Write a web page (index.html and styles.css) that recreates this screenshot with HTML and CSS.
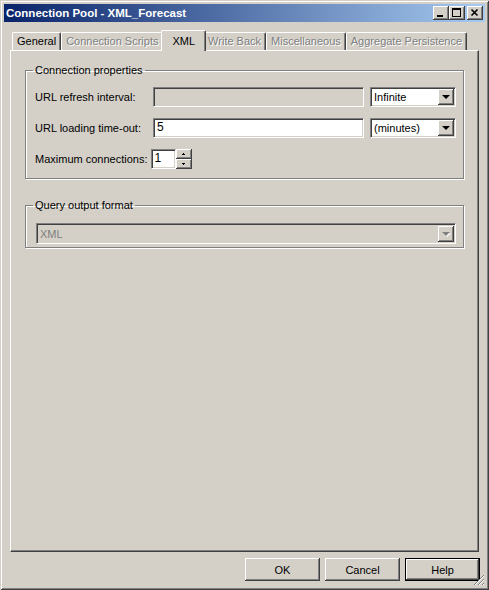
FILE: index.html
```html
<!DOCTYPE html>
<html lang="en">
<head>
  <meta charset="UTF-8">
  <title>Connection Pool - XML_Forecast</title>
  <link rel="stylesheet" href="styles.css">
</head>
<body>

  <div class="window">
    <!-- Title bar -->
    <div class="titlebar">
      <span class="title">Connection Pool - XML_Forecast</span>
      <div class="caption-buttons">
        <span class="cap-btn">
          <svg width="16" height="14" shape-rendering="crispEdges"><rect x="4" y="9" width="6" height="2" fill="#000"/></svg>
        </span>
        <span class="cap-btn">
          <svg width="16" height="14" shape-rendering="crispEdges"><rect x="3.5" y="2.5" width="8" height="8" fill="none" stroke="#000"/><rect x="3" y="3" width="9" height="1" fill="#000"/></svg>
        </span>
        <span class="cap-btn close">
          <svg width="16" height="14"><path d="M4.5 3.5 L10.5 9.5 M10.5 3.5 L4.5 9.5" stroke="#000" stroke-width="1.6"/></svg>
        </span>
      </div>
    </div>

    <!-- Tabs -->
    <div class="tabs">
      <div class="tab">General</div>
      <div class="tab disabled">Connection Scripts</div>
      <div class="tab active">XML</div>
      <div class="tab disabled">Write Back</div>
      <div class="tab disabled">Miscellaneous</div>
      <div class="tab disabled">Aggregate Persistence</div>
    </div>

    <div class="panel">
      <fieldset class="group">
        <legend>Connection properties</legend>

        <div class="row">
          <label class="label">URL refresh interval:</label>
          <div class="field readonly"></div>
          <div class="combo">
            <span class="combo-value">Infinite</span>
            <span class="combo-arrow"></span>
          </div>
        </div>

        <div class="row">
          <label class="label">URL loading time-out:</label>
          <div class="field">5</div>
          <div class="combo">
            <span class="combo-value">(minutes)</span>
            <span class="combo-arrow"></span>
          </div>
        </div>

        <div class="row">
          <label>Maximum connections:</label>
          <div class="spinner">
            <div class="spin-field">1</div>
            <div class="spin-buttons">
              <span class="spin-btn"><svg width="16" height="10" shape-rendering="crispEdges"><path d="M7 4h1v1h-1zM6 5h3v1h-3z" fill="#000"/></svg></span>
              <span class="spin-btn"><svg width="16" height="10" shape-rendering="crispEdges"><path d="M6 4h3v1h-3zM7 5h1v1h-1z" fill="#000"/></svg></span>
            </div>
          </div>
        </div>
      </fieldset>

      <fieldset class="group query">
        <legend>Query output format</legend>
        <div class="combo wide disabled">
          <span class="combo-value">XML</span>
          <span class="combo-arrow"></span>
        </div>
      </fieldset>
    </div>

    <div class="buttons">
      <button class="btn">OK</button>
      <button class="btn">Cancel</button>
      <button class="btn default">Help</button>
    </div>

    <svg class="grip" width="12" height="12" shape-rendering="crispEdges">
      <path d="M11 1 L1 11 M11 5 L5 11 M11 9 L9 11" stroke="#808080" stroke-width="1"/>
      <path d="M11 2 L2 11 M11 6 L6 11 M11 10 L10 11" stroke="#fff" stroke-width="1"/>
    </svg>
  </div>

</body>
</html>
```

FILE: styles.css
```css
* { box-sizing: border-box; }
body { margin: 0; font-family: "Liberation Sans", Arial, sans-serif; font-size: 11px; color: #000; background: #d4d0c8; }

.window { position: relative; width: 489px; height: 590px; padding: 4px; display: flex; flex-direction: column; background: #d4d0c8;
  box-shadow: inset 1px 1px #d4d0c8, inset -1px -1px #404040, inset 2px 2px #fff, inset -2px -2px #808080; }

/* title bar */
.titlebar { height: 18px; display: flex; align-items: center; justify-content: space-between; padding: 0 2px;
  background: linear-gradient(to right, #0a246a, #a6caf0); }
.title { color: #fff; font-weight: bold; font-size: 11.5px; }
.caption-buttons { display: flex; }
.cap-btn { width: 16px; height: 14px; display: block; background: #d4d0c8;
  box-shadow: inset -1px -1px #404040, inset 1px 1px #fff, inset -2px -2px #808080; }
.cap-btn svg { display: block; }
.cap-btn.close { margin-left: 2px; }

/* tabs */
.tabs { display: flex; align-items: flex-end; height: 20px; margin-top: 8px; padding-left: 8px; }
.tab { height: 18px; line-height: 17px; padding: 0 4px; border-top: 1px solid #fff; border-left: 1px solid #fff;
  border-right: 1px solid #404040; border-radius: 2px 2px 0 0; box-shadow: inset -1px 0 #808080; white-space: nowrap; }
.tab.disabled { color: #808080; text-shadow: 1px 1px #fff; }
.tab.active { position: relative; height: 21px; line-height: 21px; margin: 0 -2px -1px; padding: 0 10px; background: #d4d0c8; }
.tab.active + .tab { border-left: none; }

/* tab page */
.panel { flex: 1; margin: 0 6px; padding: 13px 14px 0; border-top: 1px solid #fff; border-left: 1px solid #fff;
  border-right: 1px solid #404040; border-bottom: 1px solid #404040; box-shadow: inset -1px -1px #808080; }

.group { margin: 0; padding: 10px 7px 9px 9px; border: 1px solid #808080; box-shadow: 1px 1px #fff, inset 1px 1px #fff;
  display: flex; flex-direction: column; gap: 11px; }
.group legend { margin-left: -2px; padding: 0 2px; line-height: 13px; }
.group.query { margin-top: 20px; padding: 11px 7px 3px 9px; }

.row { display: flex; align-items: center; height: 20px; }
.label { width: 118px; }
.row > label:not(.label) { margin-right: 3px; }

.field { width: 211px; height: 20px; padding: 0 3px; line-height: 16px; background: #fff;
  border-top: 1px solid #808080; border-left: 1px solid #808080; border-right: 1px solid #fff; border-bottom: 1px solid #fff;
  box-shadow: inset 1px 1px #404040, inset -1px -1px #d4d0c8; font-size: 12px; }
.field.readonly { background: #d4d0c8; }

.combo { width: 86px; height: 20px; margin-left: 6px; display: flex; align-items: center; padding: 2px; background: #fff;
  border-top: 1px solid #808080; border-left: 1px solid #808080; border-right: 1px solid #fff; border-bottom: 1px solid #fff;
  box-shadow: inset 1px 1px #404040, inset -1px -1px #d4d0c8; }
.combo-value { flex: 1; padding-left: 1px; }
.combo-arrow { width: 16px; height: 16px; margin: -1px; position: relative; background: #d4d0c8;
  box-shadow: inset -1px -1px #404040, inset 1px 1px #fff, inset -2px -2px #808080; }
.combo-arrow::after { content: ""; position: absolute; left: 4px; top: 6px; border-left: 4px solid transparent;
  border-right: 4px solid transparent; border-top: 4px solid #000; }
.combo.wide { width: auto; margin-left: 1px; height: 21px; }
.combo.disabled { background: #d4d0c8; color: #808080; }
.combo.disabled .combo-arrow::after { border-top-color: #808080; filter: drop-shadow(1px 1px 0 #fff); }

/* spinner */
.spinner { display: flex; height: 20px; }
.spin-field { width: 25px; height: 20px; padding: 0 3px; line-height: 16px; background: #fff; font-size: 12px;
  border-top: 1px solid #808080; border-left: 1px solid #808080; border-right: 1px solid #fff; border-bottom: 1px solid #fff;
  box-shadow: inset 1px 1px #404040, inset -1px -1px #d4d0c8; }
.spin-buttons { display: flex; flex-direction: column; width: 16px; }
.spin-btn { height: 10px; background: #d4d0c8; box-shadow: inset -1px -1px #404040, inset 1px 1px #fff, inset -2px -2px #808080; }
.spin-btn svg { display: block; }

/* dialog buttons */
.buttons { display: flex; justify-content: flex-end; gap: 5px; margin-top: 6px; padding: 0 5px 5px 0; }
.btn { width: 75px; height: 23px; padding: 0; font-family: inherit; font-size: 11px; color: #000; background: #d4d0c8; border: none;
  box-shadow: inset -1px -1px #404040, inset 1px 1px #fff, inset -2px -2px #808080; }
.btn.default { border: 1px solid #000; box-shadow: inset -1px -1px #404040, inset 1px 1px #fff, inset -2px -2px #808080; }

.grip { position: absolute; right: 4px; bottom: 4px; }
```
